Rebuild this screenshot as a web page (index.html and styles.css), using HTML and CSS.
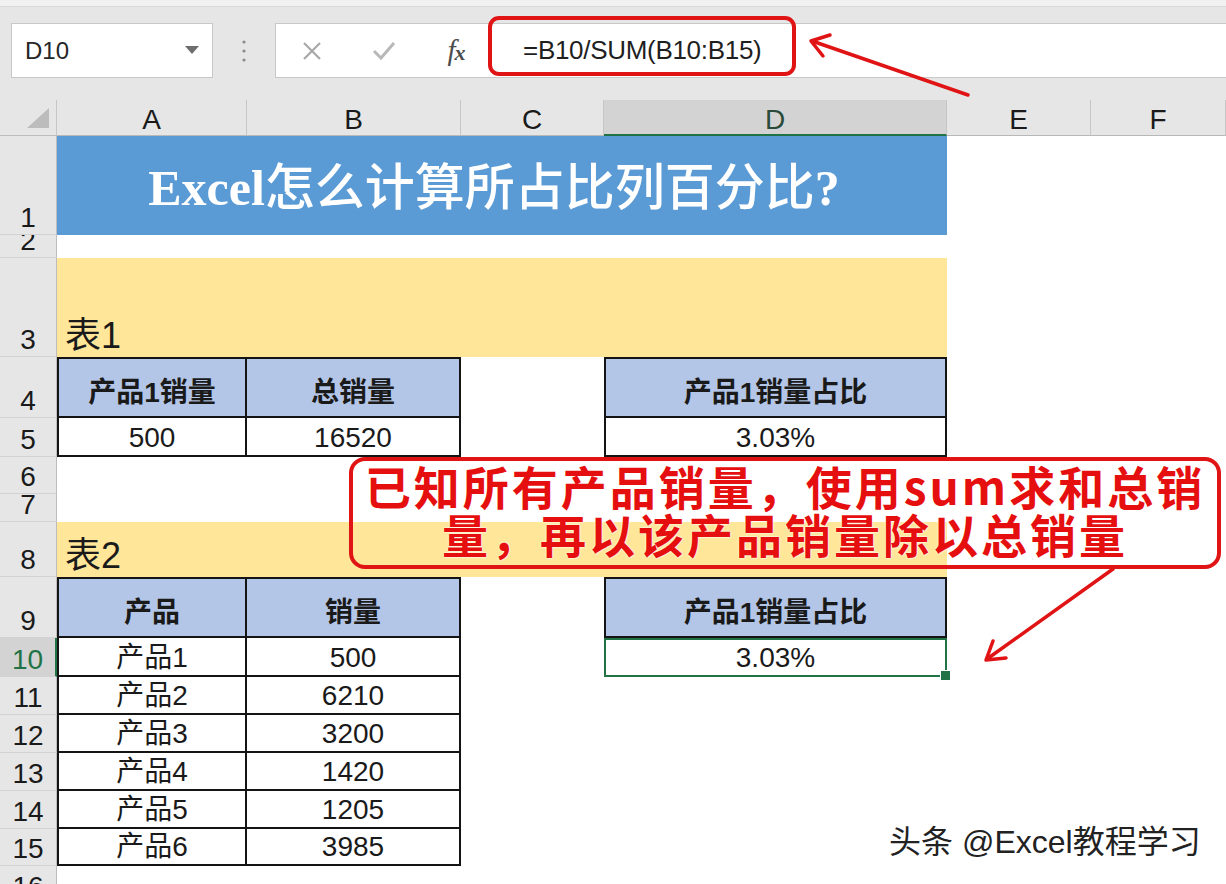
FILE: index.html
```html
<!DOCTYPE html>
<html lang="zh-CN">
<head>
<meta charset="utf-8">
<title>Excel怎么计算所占比列百分比</title>
<link rel="stylesheet" href="styles.css">
</head>
<body>
<div class="app">
  <div class="toolbar">
    <div class="topstrip"></div>
    <div class="bar">
      <div class="namebox">
        <span>D10</span>
        <svg class="dd" width="14" height="8" viewBox="0 0 14 8"><polygon points="0,0 14,0 7,8" fill="#6e6e6e"/></svg>
      </div>
      <div class="dots">
        <svg width="6" height="24" viewBox="0 0 6 24"><circle cx="3" cy="3" r="1.6" fill="#8a8a8a"/><circle cx="3" cy="12" r="1.6" fill="#8a8a8a"/><circle cx="3" cy="21" r="1.6" fill="#8a8a8a"/></svg>
      </div>
      <div class="fbox">
        <div class="ficons">
          <div class="slot"><svg width="22" height="22" viewBox="0 0 22 22"><path d="M3 3L19 19M19 3L3 19" stroke="#a8a8a8" stroke-width="2.2" fill="none"/></svg></div>
          <div class="slot"><svg width="26" height="22" viewBox="0 0 26 22"><path d="M3 11L10 18L23 3" stroke="#b8b8b8" stroke-width="3" fill="none"/></svg></div>
          <div class="slot"><span class="fx"><i>f</i><i class="x">x</i></span></div>
        </div>
        <div class="formula">=B10/SUM(B10:B15)</div>
      </div>
    </div>
  </div>

  <div class="sheet">
    <div class="row colhead">
      <div class="corner"><svg width="22" height="20" viewBox="0 0 22 20"><polygon points="22,0 22,20 0,20" fill="#bcbcbc"/></svg></div>
      <div class="ch">A</div>
      <div class="ch">B</div>
      <div class="ch">C</div>
      <div class="ch sel">D</div>
      <div class="ch">E</div>
      <div class="ch">F</div>
    </div>

    <div class="row h99">
      <div class="rh">1</div>
      <div class="cell title span4"><span class="lat">Excel</span>怎么计算所占比列百分比<span class="lat">?</span></div>
      <div class="cell"></div><div class="cell"></div>
    </div>
    <div class="row h23">
      <div class="rh">2</div>
      <div class="cell span4"></div><div class="cell"></div><div class="cell"></div>
    </div>
    <div class="row h99">
      <div class="rh">3</div>
      <div class="cell band span4">表1</div>
      <div class="cell"></div><div class="cell"></div>
    </div>
    <div class="row h61">
      <div class="rh">4</div>
      <div class="cell tb hdr bt bl">产品1销量</div>
      <div class="cell tb hdr bt">总销量</div>
      <div class="cell"></div>
      <div class="cell tb hdr bt bl">产品1销量占比</div>
      <div class="cell"></div><div class="cell"></div>
    </div>
    <div class="row h39">
      <div class="rh">5</div>
      <div class="cell tb bl">500</div>
      <div class="cell tb">16520</div>
      <div class="cell"></div>
      <div class="cell tb bl">3.03%</div>
      <div class="cell"></div><div class="cell"></div>
    </div>
    <div class="row h37">
      <div class="rh">6</div>
      <div class="cell span6"></div>
    </div>
    <div class="row h28">
      <div class="rh">7</div>
      <div class="cell span6"></div>
    </div>
    <div class="row h55">
      <div class="rh">8</div>
      <div class="cell band span4">表2</div>
      <div class="cell"></div><div class="cell"></div>
    </div>
    <div class="row h61">
      <div class="rh">9</div>
      <div class="cell tb hdr bt bl">产品</div>
      <div class="cell tb hdr bt">销量</div>
      <div class="cell"></div>
      <div class="cell tb hdr bt bl">产品1销量占比</div>
      <div class="cell"></div><div class="cell"></div>
    </div>
    <div class="row h39">
      <div class="rh sel">10</div>
      <div class="cell tb bl">产品1</div>
      <div class="cell tb">500</div>
      <div class="cell"></div>
      <div class="cell tb active">3.03%</div>
      <div class="cell"></div><div class="cell"></div>
    </div>
    <div class="row h38">
      <div class="rh">11</div>
      <div class="cell tb bl">产品2</div>
      <div class="cell tb">6210</div>
      <div class="cell span4"></div>
    </div>
    <div class="row h38">
      <div class="rh">12</div>
      <div class="cell tb bl">产品3</div>
      <div class="cell tb">3200</div>
      <div class="cell span4"></div>
    </div>
    <div class="row h38">
      <div class="rh">13</div>
      <div class="cell tb bl">产品4</div>
      <div class="cell tb">1420</div>
      <div class="cell span4"></div>
    </div>
    <div class="row h38">
      <div class="rh">14</div>
      <div class="cell tb bl">产品5</div>
      <div class="cell tb">1205</div>
      <div class="cell span4"></div>
    </div>
    <div class="row h37">
      <div class="rh">15</div>
      <div class="cell tb bl">产品6</div>
      <div class="cell tb">3985</div>
      <div class="cell span4"></div>
    </div>
    <div class="row h38">
      <div class="rh">16</div>
      <div class="cell span6"></div>
    </div>
  </div>

  <div class="callout">
    <p>已知所有产品销量，使用sum求和总销</p>
    <p>量，再以该产品销量除以总销量</p>
  </div>

  <svg class="overlay" width="1226" height="884" viewBox="0 0 1226 884">
    <rect x="490" y="18" width="304" height="56" rx="9" ry="9" fill="none" stroke="#e01414" stroke-width="4"/>
    <g stroke="#e01414" stroke-width="3.5" fill="none" stroke-linecap="round" stroke-linejoin="round">
      <path d="M968 95L812 41"/>
      <path d="M830 35L811 41L823 56"/>
      <path d="M1113 569L987 659"/>
      <path d="M1006 658L986 660L993 641"/>
    </g>
  </svg>

  <div class="watermark">头条 @Excel教程学习</div>
</div>
</body>
</html>
```
FILE: styles.css
```css
* { box-sizing: border-box; }

body {
  margin: 0;
  background: #fff;
  font-family: "Liberation Sans", "Noto Sans CJK SC", sans-serif;
  color: #1a1a1a;
}

.app {
  position: relative;
  width: 1226px;
  height: 884px;
  overflow: hidden;
}

/* ---------- toolbar / formula bar ---------- */
.toolbar {
  height: 100px;
  background: #e6e6e6;
}

.topstrip {
  height: 7px;
  background: #f1f1f1;
  border-bottom: 1px solid #d8d8d8;
}

.bar {
  display: flex;
  align-items: center;
  margin-top: 16px;
  height: 55px;
}

.namebox {
  margin-left: 11px;
  width: 202px;
  height: 55px;
  background: #fff;
  border: 1px solid #c8c8c8;
  display: flex;
  align-items: center;
  justify-content: space-between;
  padding: 0 13px 0 13px;
  font-size: 24px;
  color: #262626;
}

.namebox .dd { margin-top: -2px; }

.dots {
  width: 62px;
  display: flex;
  justify-content: center;
  align-items: center;
}

.fbox {
  flex: 1;
  height: 55px;
  background: #fff;
  border: 1px solid #c8c8c8;
  border-right: none;
  display: flex;
  align-items: center;
}

.ficons {
  display: flex;
  width: 216px;
}

.slot {
  width: 72px;
  display: flex;
  justify-content: center;
  align-items: center;
}

.fx {
  font-family: "Liberation Serif", serif;
  font-size: 29px;
  color: #4d4d4d;
  font-style: italic;
  letter-spacing: -1px;
}

.fx .x { font-size: 22px; font-weight: bold; }

.formula {
  padding-left: 31px;
  font-size: 26px;
  color: #1f1f1f;
  letter-spacing: -0.3px;
}

/* ---------- sheet ---------- */
.sheet {
  height: 784px;
  overflow: hidden;
  display: flex;
  flex-direction: column;
}

.row {
  display: grid;
  grid-template-columns: 57px 190px 214px 143px 343px 144px 135px;
  flex: none;
}

.colhead { height: 36px; }
.h99 { height: 99px; }
.h23 { height: 23px; }
.h61 { height: 61px; }
.h39 { height: 39px; }
.h38 { height: 38px; }
.h37 { height: 37px; }
.h28 { height: 28px; }
.h55 { height: 55px; }

.span4 { grid-column: span 4; }
.span6 { grid-column: span 6; }

.corner {
  background: #e6e6e6;
  border-right: 1px solid #c6c6c6;
  border-bottom: 1px solid #bdbdbd;
  display: flex;
  align-items: flex-end;
  justify-content: flex-end;
  padding: 0 7px 7px 0;
}

.ch {
  background: #e6e6e6;
  border-right: 1px solid #c6c6c6;
  border-bottom: 1px solid #b8b8b8;
  display: flex;
  align-items: flex-end;
  justify-content: center;
  font-size: 28px;
  line-height: 1;
  padding-bottom: 1px;
  color: #1a1a1a;
}

.ch.sel {
  background: #d3d3d3;
  border-bottom: 2px solid #217346;
  color: #2b4b3a;
  padding-bottom: 0;
}

.rh {
  background: #e6e6e6;
  border-right: 1px solid #bdbdbd;
  border-bottom: 1px solid #d2d2d2;
  display: flex;
  align-items: flex-end;
  justify-content: center;
  font-size: 28px;
  line-height: 1;
  padding-bottom: 2px;
  overflow: hidden;
  color: #1a1a1a;
}

.rh.sel {
  background: #d3d3d3;
  color: #217346;
  border-right: 2px solid #217346;
}

.cell {
  display: flex;
  align-items: flex-end;
  justify-content: center;
  font-size: 28px;
  line-height: 1.2;
  overflow: hidden;
  background: #fff;
}

.title {
  background: #5b9bd5;
  color: #fff;
  align-items: center;
  padding-top: 4px;
  padding-right: 16px;
  font-size: 50px;
  font-weight: 500;
  letter-spacing: 0;
}

.title .lat {
  font-family: "Liberation Serif", serif;
  font-weight: bold;
}

.band {
  background: #ffe699;
  justify-content: flex-start;
  padding-left: 8px;
  font-size: 36px;
  line-height: 1.2;
  padding-bottom: 0;
  color: #1a1a1a;
}

.tb {
  border-right: 2px solid #141414;
  border-bottom: 2px solid #141414;
  padding-bottom: 0;
  color: #1a1a1a;
}

.tb.bt { border-top: 2px solid #141414; }
.tb.bl { border-left: 2px solid #141414; }

.hdr {
  background: #b4c6e7;
  font-weight: bold;
  padding-bottom: 6px;
}

.active {
  position: relative;
  overflow: visible;
  border: 2px solid #217346;
  border-left: 2px solid #217346;
}

.active::after {
  content: "";
  position: absolute;
  right: -6px;
  bottom: -6px;
  width: 9px;
  height: 9px;
  background: #217346;
  border: 1px solid #fff;
}

/* ---------- overlays ---------- */
.callout {
  position: absolute;
  left: 349px;
  top: 457px;
  width: 872px;
  height: 112px;
  border: 4px solid #e01414;
  border-radius: 16px;
  padding-top: 0;
  text-align: center;
  color: #e60f0f;
  font-family: "Noto Sans CJK SC", sans-serif;
  font-weight: bold;
  font-size: 46px;
  letter-spacing: 3px;
  line-height: 48px;
  text-shadow: 0 0 2px #fff, 0 0 2px #fff;
}

.callout p { margin: 0; }

.overlay {
  position: absolute;
  left: 0;
  top: 0;
  pointer-events: none;
}

.watermark {
  position: absolute;
  left: 889px;
  top: 823px;
  font-size: 32px;
  line-height: 38px;
  color: #222;
  white-space: nowrap;
  text-shadow: 0 0 2px #fff, 1px 1px 0 #fff, -1px -1px 0 #fff;
}
```
